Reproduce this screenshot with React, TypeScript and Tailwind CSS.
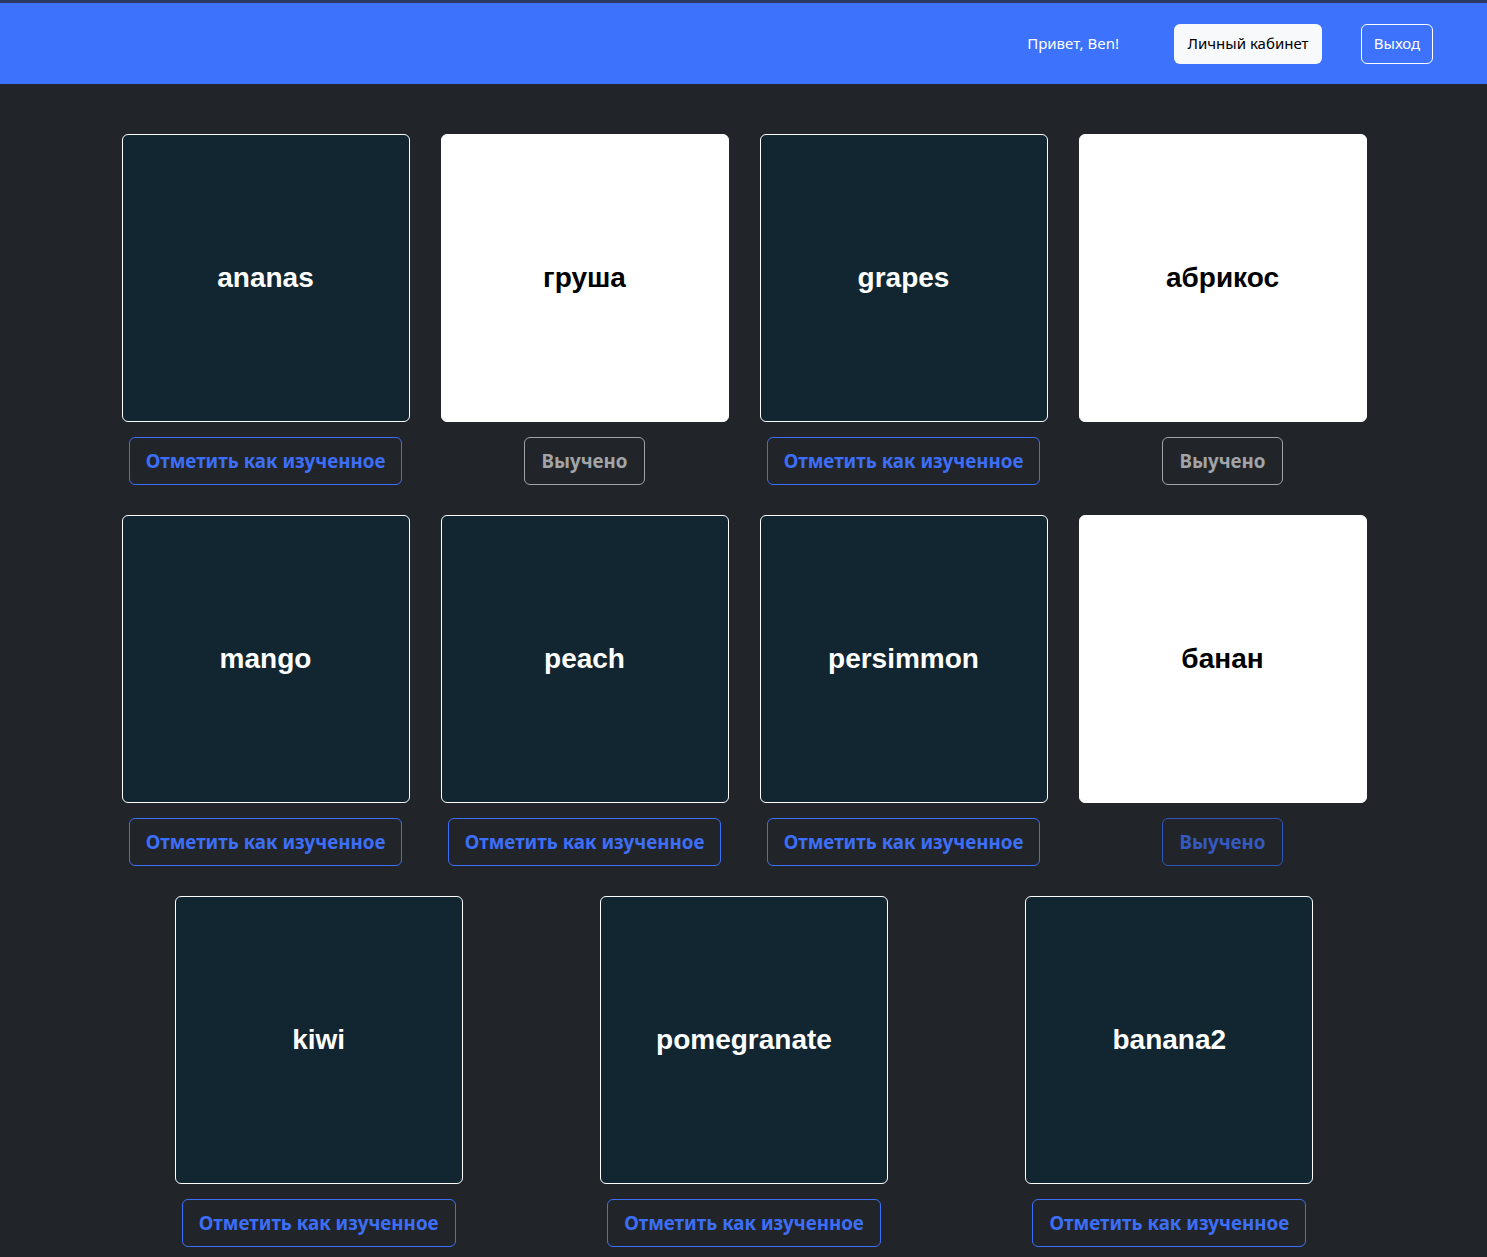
import React from 'react';

type Card = { word: string; learned: boolean; faded?: boolean };

const cards: Card[] = [
  { word: 'ananas', learned: false },
  { word: 'груша', learned: true },
  { word: 'grapes', learned: false },
  { word: 'абрикос', learned: true },
  { word: 'mango', learned: false },
  { word: 'peach', learned: false },
  { word: 'persimmon', learned: false },
  { word: 'банан', learned: true, faded: true },
  { word: 'kiwi', learned: false },
  { word: 'pomegranate', learned: false },
  { word: 'banana2', learned: false },
];

function WordCard({ card }: { card: Card }) {
  return (
    <div className="flex w-[288px] flex-col items-center">
      <div
        className={
          card.learned
            ? 'flex h-[288px] w-[288px] items-center justify-center rounded-md border border-white bg-white'
            : 'flex h-[288px] w-[288px] items-center justify-center rounded-md border border-white bg-[#112630]'
        }
      >
        <span
          className={
            card.learned
              ? "font-['Liberation_Sans',Arial,sans-serif] text-[28px] font-bold text-black"
              : "font-['Liberation_Sans',Arial,sans-serif] text-[28px] font-bold text-white"
          }
        >
          {card.word}
        </span>
      </div>
      {card.learned ? (
        <button
          className={
            card.faded
              ? 'mt-[15px] h-[48px] w-[121px] rounded-md border border-[#2f55b8] pt-px text-[18.75px] font-bold text-[#3459c0]'
              : 'mt-[15px] h-[48px] w-[121px] rounded-md border border-[#9ea3a8] pt-px text-[18.75px] font-bold text-[#a1a4a8]'
          }
        >
          Выучено
        </button>
      ) : (
        <button className="mt-[15px] h-[48px] rounded-md border border-[#3d6ef7] px-4 pt-px text-[18.75px] font-bold text-[#3d6ef7]">
          Отметить как изученное
        </button>
      )}
    </div>
  );
}

export default function App() {
  return (
    <div className="h-[1257px] overflow-hidden bg-[#212529] font-['Noto_Sans','Open_Sans',sans-serif]">
      <header className="flex h-[84px] items-center justify-end border-t-[3px] border-[#2a3a64] bg-[#3d72fc] pr-[54px]">
        <span className="text-[15px] text-white">Привет, Ben!</span>
        <button className="ml-[55px] h-[40px] w-[148px] rounded-md bg-[#f8f9fa] text-[15px] text-black">
          Личный кабинет
        </button>
        <button className="ml-[39px] h-[40px] w-[72px] rounded-md border border-white text-[15px] text-white">
          Выход
        </button>
      </header>

      <main className="ml-[106px] mt-[50px] flex w-[1276px] flex-wrap justify-around gap-y-[30px]">
        {cards.map((c) => (
          <WordCard key={c.word} card={c} />
        ))}
      </main>
    </div>
  );
}
